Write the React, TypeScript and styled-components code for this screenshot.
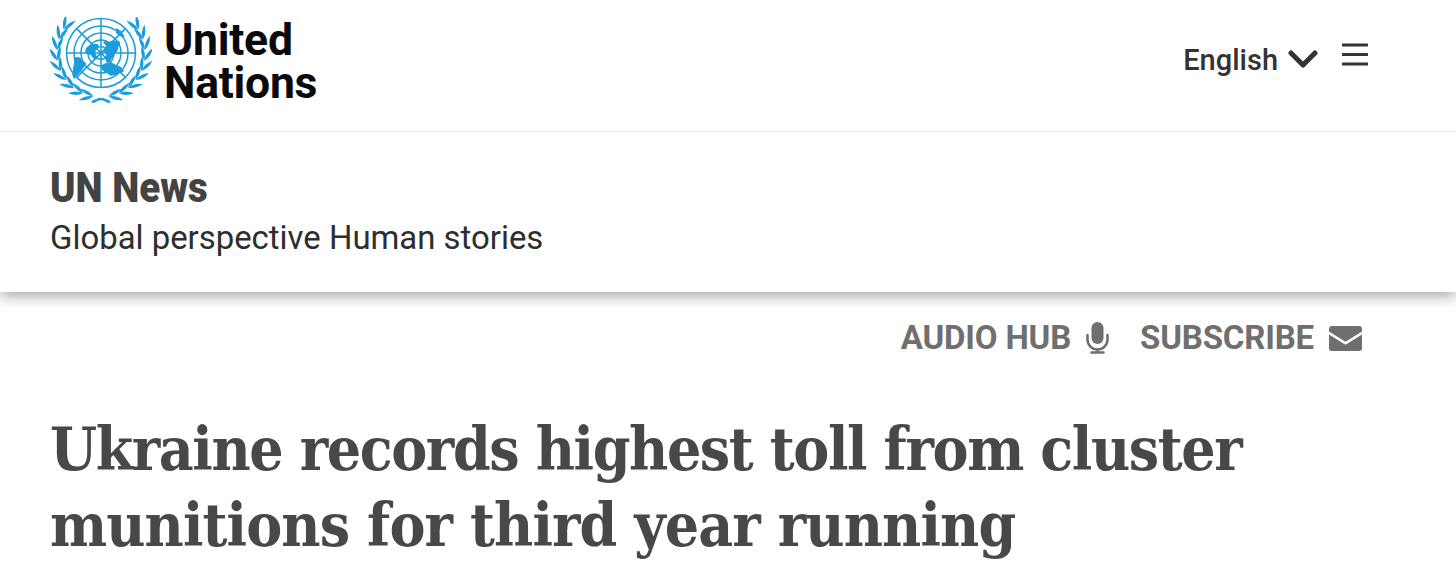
import React from "react";
import styled, { createGlobalStyle } from "styled-components";

const Global = createGlobalStyle`
  html, body { margin: 0; padding: 0; background: #fff; }
  body { font-family: Roboto, "Liberation Sans", sans-serif; overflow: hidden; }
`;
const Page = styled.div`
  width: 1456px;
  height: 588px;
  overflow: hidden;
  background: #fff;
`;
const TopBar = styled.header`
  height: 132px;
  box-sizing: border-box;
  border-bottom: 1px solid #e8e8e8;
  display: flex;
  justify-content: space-between;
  padding: 17px 88px 0 50px;
`;
const Brand = styled.div`
  display: flex;
  gap: 12px;
  align-items: flex-start;
`;
const BrandName = styled.div`
  font-weight: 700;
  font-size: 44.5px;
  line-height: 43px;
  color: #0a0a0a;
  letter-spacing: -0.25px;
  padding-top: 2px;
`;
const TopActions = styled.div`
  display: flex;
  align-items: flex-start;
  padding-top: 25px;
`;
const Lang = styled.span`
  font-size: 29px;
  line-height: 36px;
  font-weight: 500;
  color: #333;
`;
const Chevron = styled.svg`
  margin: 7px 0 0 10px;
`;
const Burger = styled.svg`
  margin: 1px 0 0 24px;
`;
const SubBar = styled.div`
  height: 160px;
  box-sizing: border-box;
  padding: 30px 50px 0;
  background: #fff;
  box-shadow: 0 4px 14px rgba(0, 0, 0, 0.36);
  clip-path: inset(0 0 -30px 0);
`;
const SiteName = styled.div`
  font-weight: 900;
  font-size: 43px;
  line-height: 50px;
  color: #434343;
  transform: scaleX(0.895);
  transform-origin: left center;
`;
const Tagline = styled.div`
  font-size: 32.9px;
  line-height: 38px;
  color: #2e2e2e;
  margin-top: 7px;
`;
const Utility = styled.nav`
  display: flex;
  justify-content: flex-end;
  align-items: center;
  gap: 31px;
  padding: 25px 94px 0 0;
`;
const UtilLink = styled.span`
  display: flex;
  align-items: center;
  gap: 15px;
  font-size: 33px;
  line-height: 42px;
  font-weight: 700;
  color: #6f6f6f;
  letter-spacing: -0.17px;
`;
const Headline = styled.h1`
  margin: 52px 50px 0;
  font-family: "DejaVu Serif", "Liberation Serif", serif;
  font-weight: 700;
  font-size: 60px;
  line-height: 76px;
  color: #484848;
  white-space: nowrap;
`;
const HeadLine = styled.span<{ $track: number }>`
  display: block;
  letter-spacing: ${(p) => p.$track}px;
  transform: scaleX(0.9);
  transform-origin: left center;
`;

const BLUE = "#1b9ddb";

const leafPath = (x: number, y: number, deg: number, len: number, w: number) => {
  const r = (deg * Math.PI) / 180;
  const ux = Math.cos(r);
  const uy = Math.sin(r);
  const ex = x + ux * len;
  const ey = y + uy * len;
  const mx = x + ux * len * 0.45;
  const my = y + uy * len * 0.45;
  const f = (n: number) => n.toFixed(2);
  return `M${f(x)} ${f(y)}Q${f(mx - uy * w)} ${f(my + ux * w)} ${f(ex)} ${f(ey)}Q${f(mx + uy * w)} ${f(my - ux * w)} ${f(x)} ${f(y)}z`;
};

// Pairs of blades along the left branch: angle below the horizontal, seen from the globe's centre.
const branch = [80, 66, 52, 38, 24, 10, -4, -18, -32];
const R = 44;
const bladePaths = branch.flatMap((a) => {
  const r = (a * Math.PI) / 180;
  const x = 51 - R * Math.cos(r);
  const y = 36 + R * Math.sin(r);
  const heading = -90 - a;
  return [leafPath(x, y, heading + 20, 15, 3.4), leafPath(x, y, heading - 24, 15, 3.4)];
});

const WreathHalf = ({ flip }: { flip?: boolean }) => (
  <g transform={flip ? "translate(102 0) scale(-1 1)" : undefined} fill={BLUE}>
    {bladePaths.map((d) => (
      <path key={d} d={d} />
    ))}
    <path d="M41 85c3-3 7-4 12-4l7 4-2 1-5-3c-4 0-7 1-10 3z" />
  </g>
);

const Emblem = () => (
  <svg width="102" height="86" viewBox="0 0 102 86" aria-label="UN emblem">
    <WreathHalf />
    <WreathHalf flip />
    <circle cx="51" cy="36" r="36" fill="#fff" />
    <g fill="none" stroke={BLUE} strokeWidth="1.5">
      <circle cx="51" cy="36" r="34.5" />
      <circle cx="51" cy="36" r="27" />
      <circle cx="51" cy="36" r="20" />
      <circle cx="51" cy="36" r="13" />
      <circle cx="51" cy="36" r="6.5" />
      <path d="M51 1.500v69M16.500 36h69M26.600 11.600l48.800 48.800M75.400 11.600L26.600 60.400" />
    </g>
    <g fill={BLUE}>
      <path d="M37 30c3-3 7-3 10-3 3 0 1 3 0 4-2 1-3 3-2 5 1 3 3 4 3 6-3 1-6-1-7-4l-5-1c-1-3-1-5 1-7z" />
      <path d="M53 25c3-2 5 1 8-1 3-1 5 1 8 0 2 2 1 5-1 6 1 3-2 6-4 8-2 3-4 7-7 8-2-3-1-6-1-8 1-2-2-3-3-4 2-2 3-3 3-5-1-1-2-3-3-4z" />
      <path d="M24 41c3-2 7-1 8 2l4 3c-1 4-3 5-5 8-2 3-5 5-7 8-2-3-2-6-1-9 0-4 2-7 1-12z" />
      <path d="M52 48c5-3 10-3 14 0 4 1 7 3 8 6-3 3-6 1-8 4-3 0-5 2-8-1-2-2-5-2-6-5-1-1-1-3 0-4z" />
      <path d="M66 11l5 3 4 6-5-1-4-3z" />
    </g>
  </svg>
);

const Mic = () => (
  <svg width="23" height="32" viewBox="0 0 23 32">
    <rect x="5.500" y="0" width="12" height="22" rx="6" fill="#6f6f6f" />
    <path d="M1.500 13v4.500a10 10 0 0 0 20 0V13M11.500 27.500v3M5.500 30.500h12" fill="none" stroke="#6f6f6f" strokeWidth="2.500" strokeLinecap="round" />
  </svg>
);
const Envelope = () => (
  <svg width="33" height="25" viewBox="0 0 33 25">
    <path d="M3 0h27a3 3 0 0 1 3 3v2.400L16.500 15.800 0 5.400V3a3 3 0 0 1 3-3z" fill="#6f6f6f" />
    <path d="M0 8.400l16.500 10.400L33 8.400V22a3 3 0 0 1-3 3H3a3 3 0 0 1-3-3z" fill="#6f6f6f" />
  </svg>
);

export default function App() {
  return (
    <Page>
      <Global />
      <TopBar>
        <Brand>
          <Emblem />
          <BrandName>United<br />Nations</BrandName>
        </Brand>
        <TopActions>
          <Lang>English</Lang>
          <Chevron width="30" height="20" viewBox="0 0 30 20">
            <path d="M3 4l12 12L27 4" fill="none" stroke="#333" strokeWidth="5" strokeLinecap="round" strokeLinejoin="round" />
          </Chevron>
          <Burger width="26" height="24" viewBox="0 0 26 24">
            <path d="M1 2h24M1 11.500h24M1 21h24" stroke="#333" strokeWidth="3" strokeLinecap="round" />
          </Burger>
        </TopActions>
      </TopBar>
      <SubBar>
        <SiteName>UN News</SiteName>
        <Tagline>Global perspective Human stories</Tagline>
      </SubBar>
      <Utility>
        <UtilLink>AUDIO HUB <Mic /></UtilLink>
        <UtilLink>SUBSCRIBE <Envelope /></UtilLink>
      </Utility>
      <Headline>
        <HeadLine $track={-1.55}>Ukraine records highest toll from cluster</HeadLine>
        <HeadLine $track={-1}>munitions for third year running</HeadLine>
      </Headline>
    </Page>
  );
}
